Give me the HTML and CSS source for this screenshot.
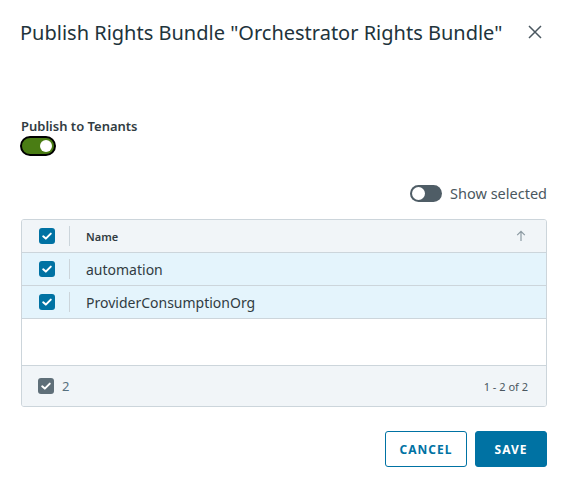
FILE: index.html
```html
<!DOCTYPE html>
<html>
<head>
<meta charset="utf-8">
<link rel="stylesheet" href="styles.css">
</head>
<body>
<div class="modal">
  <div class="header">
    <h1 class="title">Publish Rights Bundle "Orchestrator Rights Bundle"</h1>
    <button class="close" aria-label="Close">
      <svg width="16" height="16" viewBox="0 0 16 16"><path d="M2 2 L14 14 M14 2 L2 14" stroke="#4a5760" stroke-width="1.5" fill="none"/></svg>
    </button>
  </div>
  <div class="field">
    <div class="label">Publish to Tenants</div>
    <div class="toggle on"><span class="knob"></span></div>
  </div>
  <div class="show-row">
    <div class="toggle off"><span class="knob"></span></div>
    <span class="show-label">Show selected</span>
  </div>
  <div class="grid">
    <div class="row head">
      <div class="cell-check"><span class="cb"><svg viewBox="0 0 16 16" width="16" height="16"><path d="M4.2 8.3 L6.8 10.6 L11.8 5.6" stroke="#fff" stroke-width="2" fill="none" stroke-linecap="round" stroke-linejoin="round"/></svg></span></div>
      <div class="sep"></div>
      <div class="cell-name">Name</div>
      <div class="sort"><svg width="10" height="12" viewBox="0 0 10 12"><path d="M5 11 V1.5 M1.2 5.2 L5 1.4 L8.8 5.2" stroke="#8c9aa3" stroke-width="1.2" fill="none"/></svg></div>
    </div>
    <div class="row sel">
      <div class="cell-check"><span class="cb"><svg viewBox="0 0 16 16" width="16" height="16"><path d="M4.2 8.3 L6.8 10.6 L11.8 5.6" stroke="#fff" stroke-width="2" fill="none" stroke-linecap="round" stroke-linejoin="round"/></svg></span></div>
      <div class="sep"></div>
      <div class="cell-name">automation</div>
    </div>
    <div class="row sel">
      <div class="cell-check"><span class="cb"><svg viewBox="0 0 16 16" width="16" height="16"><path d="M4.2 8.3 L6.8 10.6 L11.8 5.6" stroke="#fff" stroke-width="2" fill="none" stroke-linecap="round" stroke-linejoin="round"/></svg></span></div>
      <div class="sep"></div>
      <div class="cell-name">ProviderConsumptionOrg</div>
    </div>
    <div class="empty"></div>
    <div class="footer">
      <div class="foot-left"><span class="cb gray"><svg viewBox="0 0 16 16" width="16" height="16"><path d="M4.2 8.3 L6.8 10.6 L11.8 5.6" stroke="#fff" stroke-width="2" fill="none" stroke-linecap="round" stroke-linejoin="round"/></svg></span><span class="count">2</span></div>
      <div class="pages">1 - 2 of 2</div>
    </div>
  </div>
  <div class="actions">
    <button class="btn outline">CANCEL</button>
    <button class="btn primary">SAVE</button>
  </div>
</div>
</body>
</html>
```

FILE: styles.css
```css
* { box-sizing: border-box; }
html, body { margin: 0; padding: 0; background: #fff; }
body { font-family: "Noto Sans", "Liberation Sans", sans-serif; color: #313c42; }
.modal { width: 562px; padding: 0 15px 0 21px; }
.header { display: flex; align-items: center; justify-content: space-between; height: 64px; }
.title { margin: 0 0 0 -1px; font-size: 20px; font-weight: 400; color: #21333b; letter-spacing: 0; white-space: nowrap; }
.close { border: 0; background: none; padding: 0; width: 16px; height: 16px; margin-right: 4px; display: flex; }
.field { margin-top: 53px; }
.label { font-size: 13px; font-weight: 600; color: #313c42; line-height: 18px; }
.toggle { width: 36px; height: 20px; border-radius: 10px; position: relative; }
.toggle.on { background: #4a7d14; border: 2px solid #000; margin-left: -1px; margin-top: 1px; }
.toggle.on .knob { position: absolute; right: 2px; top: 2px; width: 12px; height: 12px; border-radius: 50%; background: #fff; }
.show-row { display: flex; align-items: center; justify-content: flex-end; gap: 8px; margin-top: 27px; padding-right: 0; }
.toggle.off { width: 32px; height: 17px; background: #4f5d66; border-radius: 9px; }
.toggle.off .knob { position: absolute; left: 2px; top: 2px; width: 13px; height: 13px; border-radius: 50%; background: #fff; }
.show-label { font-size: 14.5px; color: #4a5760; }
.grid { margin-top: 16px; border: 1px solid #ccd5db; border-radius: 3px; width: 526px; overflow: hidden; }
.row { display: flex; align-items: center; height: 33px; border-bottom: 1px solid #ccd5db; }
.row.head { background: #f1f5f8; }
.row.sel { background: #e4f4fc; }
.cell-check { width: 47px; display: flex; justify-content: center; padding-left: 2px; }
.cb { width: 16px; height: 16px; border-radius: 3px; background: #0072a3; display: flex; }
.cb.gray { background: #5f6f79; }
.sep { width: 1px; height: 20px; background: #ccd5db; }
.cell-name { padding-left: 16px; font-size: 14px; color: #313c42; flex: 1; }
.head .cell-name { font-size: 11px; font-weight: 600; color: #313c42; }
.sort { padding-right: 20px; display: flex; }
.empty { height: 47px; border-bottom: 1px solid #ccd5db; }
.footer { display: flex; align-items: center; justify-content: space-between; height: 40px; background: #f1f5f8; padding: 0 18px 0 16px; }
.foot-left { display: flex; align-items: center; gap: 8px; }
.count { font-size: 13px; color: #56707e; }
.pages { font-size: 11px; color: #4a5760; }
.actions { display: flex; justify-content: flex-end; gap: 8px; margin-top: 24px; padding-right: 0; width: 526px; }
.btn { height: 36px; border-radius: 3px; font-family: inherit; font-size: 12px; font-weight: 700; letter-spacing: 1px; padding: 0 12px; }
.btn.outline { background: #fff; border: 1px solid #0072a3; color: #0072a3; width: 82px; }
.btn.primary { background: #0072a3; border: 1px solid #0072a3; color: #fff; width: 72px; }
```
